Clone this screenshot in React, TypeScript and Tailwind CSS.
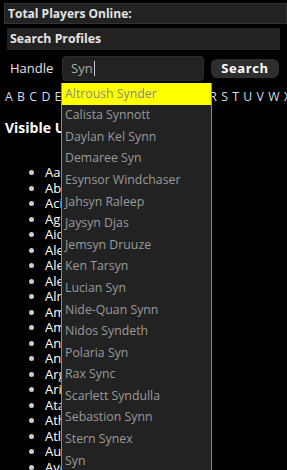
import React from "react";

const MATCHES = [
  "Altroush Synder",
  "Calista Synnott",
  "Daylan Kel Synn",
  "Demaree Syn",
  "Esynsor Windchaser",
  "Jahsyn Raleep",
  "Jaysyn Djas",
  "Jemsyn Druuze",
  "Ken Tarsyn",
  "Lucian Syn",
  "Nide-Quan Synn",
  "Nidos Syndeth",
  "Polaria Syn",
  "Rax Sync",
  "Scarlett Syndulla",
  "Sebastion Synn",
  "Stern Synex",
  "Syn",
  "Synara Vel",
];

const PLAYERS = [
  "Aalto Venn", "Abrel Kasso", "Acira Dane", "Agnar Strom", "Aiden Voss",
  "Alec Marrow", "Alena Suun", "Alexi Korr", "Alric Thane", "Amara Lys",
  "Amos Quell", "Ananda Rho", "Anwen Teal", "Argus Brae", "Aria Solen",
  "Atara Venn", "Athos Kade", "Atlas Mir", "Aurel Dusk", "Avery Hale",
];

const LETTERS = "ABCDEFGHIJKLMNOPQRSTUVWXYZ".split("");

export default function App() {
  return (
    <div className="relative w-[287px] h-[470px] overflow-hidden bg-black text-[12.3px] text-[#ddd] font-['Open_Sans',sans-serif]">
      <div className="mt-[3px] ml-[4px] h-[21px] flex items-center pl-[3px] bg-[#222] border border-[#333] font-bold text-[12px] text-[#e4e4e4]">
        Total Players Online:
      </div>
      <div className="mt-[4px] mx-[7px] h-[22px] flex items-center pl-[3px] bg-[#222] font-bold text-[#e4e4e4]">
        Search Profiles
      </div>

      <div className="mt-[6px] flex items-center h-[25px]">
        <span className="ml-[10px] w-[52px] text-[13px] text-[#e4e4e4]">Handle</span>
        <div className="w-[142px] h-[25px] rounded-[4px] bg-[#222] border border-[#2c2c2c] flex items-center pl-[8px] text-[13px] text-[#aaa]">
          Syn<span className="ml-px w-px h-[15px] bg-[#ccc]" />
        </div>
        <button className="ml-[7px] w-[68px] h-[19px] rounded-[6px] bg-[#2e2e2e] font-bold text-[13px] text-white tracking-[0.6px] leading-none">
          Search
        </button>
      </div>

      <div className="mt-[8px] ml-[5px] flex gap-[4.3px] text-[#d2deea] leading-[16px] whitespace-nowrap">
        {LETTERS.map(l => <span key={l}>{l}</span>)}
      </div>

      <div className="mt-[12px] ml-[5px] font-bold text-[14px] text-white">Visible Users</div>

      <ul className="mt-[27px] ml-[5px] pl-[40px] list-disc marker:text-[#ccc] text-[13px] text-white leading-[15.5px]">
        {PLAYERS.map((p, i) => <li key={i}>{p}</li>)}
      </ul>

      <div className="absolute left-[61px] top-[83px] w-[151px] bg-[#222] border-x border-[#8a8a8a]">
        {MATCHES.map((m, i) => (
          <div
            key={m}
            className={`h-[21.6px] flex items-center pl-[3px] whitespace-nowrap overflow-hidden ${i === 0 ? "bg-[#ffff00] text-[#888]" : "text-[#9a9a9a]"}`}
          >
            {m}
          </div>
        ))}
      </div>
    </div>
  );
}
